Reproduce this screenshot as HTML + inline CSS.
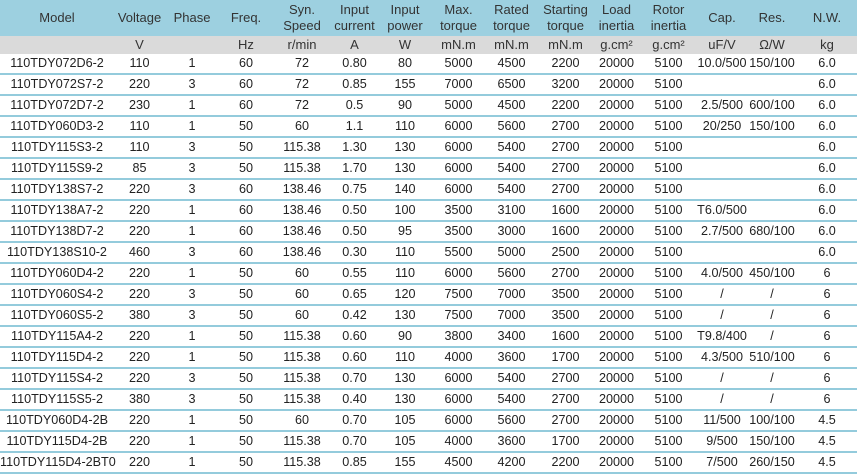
<!DOCTYPE html>
<html><head><meta charset="utf-8"><style>
*{margin:0;padding:0;box-sizing:border-box}
body{width:857px;height:475px;background:#fff;font-family:"Liberation Sans",Arial,sans-serif;font-size:12.6px;color:#222;overflow:hidden}
table{border-collapse:separate;border-spacing:0;table-layout:fixed;width:857px}
td{text-align:center;white-space:nowrap;overflow:visible;padding:0}
tr.h td{background:#9dd0e0;height:36px;line-height:16px;color:#333;font-size:13px}
tr.u td{background:#dadada;height:18px;line-height:18px;color:#333;font-size:13px}
tr.r td{height:21px;line-height:19px;border-bottom:2px solid #94cbdc}
</style></head><body>
<table>
<colgroup><col style="width:114px"><col style="width:51px"><col style="width:54px"><col style="width:54px"><col style="width:58px"><col style="width:47px"><col style="width:54px"><col style="width:53px"><col style="width:53px"><col style="width:55px"><col style="width:47px"><col style="width:57px"><col style="width:50px"><col style="width:50px"><col style="width:60px"></colgroup>
<tr class="h"><td>Model</td><td>Voltage</td><td>Phase</td><td>Freq.</td><td>Syn.<br>Speed</td><td>Input<br>current</td><td>Input<br>power</td><td>Max.<br>torque</td><td>Rated<br>torque</td><td>Starting<br>torque</td><td>Load<br>inertia</td><td>Rotor<br>inertia</td><td>Cap.</td><td>Res.</td><td>N.W.</td></tr>
<tr class="u"><td></td><td>V</td><td></td><td>Hz</td><td>r/min</td><td>A</td><td>W</td><td>mN.m</td><td>mN.m</td><td>mN.m</td><td>g.cm²</td><td>g.cm²</td><td>uF/V</td><td>Ω/W</td><td>kg</td></tr>
<tr class="r"><td>110TDY072D6-2</td><td>110</td><td>1</td><td>60</td><td>72</td><td>0.80</td><td>80</td><td>5000</td><td>4500</td><td>2200</td><td>20000</td><td>5100</td><td>10.0/500</td><td>150/100</td><td>6.0</td></tr>
<tr class="r"><td>110TDY072S7-2</td><td>220</td><td>3</td><td>60</td><td>72</td><td>0.85</td><td>155</td><td>7000</td><td>6500</td><td>3200</td><td>20000</td><td>5100</td><td></td><td></td><td>6.0</td></tr>
<tr class="r"><td>110TDY072D7-2</td><td>230</td><td>1</td><td>60</td><td>72</td><td>0.5</td><td>90</td><td>5000</td><td>4500</td><td>2200</td><td>20000</td><td>5100</td><td>2.5/500</td><td>600/100</td><td>6.0</td></tr>
<tr class="r"><td>110TDY060D3-2</td><td>110</td><td>1</td><td>50</td><td>60</td><td>1.1</td><td>110</td><td>6000</td><td>5600</td><td>2700</td><td>20000</td><td>5100</td><td>20/250</td><td>150/100</td><td>6.0</td></tr>
<tr class="r"><td>110TDY115S3-2</td><td>110</td><td>3</td><td>50</td><td>115.38</td><td>1.30</td><td>130</td><td>6000</td><td>5400</td><td>2700</td><td>20000</td><td>5100</td><td></td><td></td><td>6.0</td></tr>
<tr class="r"><td>110TDY115S9-2</td><td>85</td><td>3</td><td>50</td><td>115.38</td><td>1.70</td><td>130</td><td>6000</td><td>5400</td><td>2700</td><td>20000</td><td>5100</td><td></td><td></td><td>6.0</td></tr>
<tr class="r"><td>110TDY138S7-2</td><td>220</td><td>3</td><td>60</td><td>138.46</td><td>0.75</td><td>140</td><td>6000</td><td>5400</td><td>2700</td><td>20000</td><td>5100</td><td></td><td></td><td>6.0</td></tr>
<tr class="r"><td>110TDY138A7-2</td><td>220</td><td>1</td><td>60</td><td>138.46</td><td>0.50</td><td>100</td><td>3500</td><td>3100</td><td>1600</td><td>20000</td><td>5100</td><td>T6.0/500</td><td></td><td>6.0</td></tr>
<tr class="r"><td>110TDY138D7-2</td><td>220</td><td>1</td><td>60</td><td>138.46</td><td>0.50</td><td>95</td><td>3500</td><td>3000</td><td>1600</td><td>20000</td><td>5100</td><td>2.7/500</td><td>680/100</td><td>6.0</td></tr>
<tr class="r"><td>110TDY138S10-2</td><td>460</td><td>3</td><td>60</td><td>138.46</td><td>0.30</td><td>110</td><td>5500</td><td>5000</td><td>2500</td><td>20000</td><td>5100</td><td></td><td></td><td>6.0</td></tr>
<tr class="r"><td>110TDY060D4-2</td><td>220</td><td>1</td><td>50</td><td>60</td><td>0.55</td><td>110</td><td>6000</td><td>5600</td><td>2700</td><td>20000</td><td>5100</td><td>4.0/500</td><td>450/100</td><td>6</td></tr>
<tr class="r"><td>110TDY060S4-2</td><td>220</td><td>3</td><td>50</td><td>60</td><td>0.65</td><td>120</td><td>7500</td><td>7000</td><td>3500</td><td>20000</td><td>5100</td><td>/</td><td>/</td><td>6</td></tr>
<tr class="r"><td>110TDY060S5-2</td><td>380</td><td>3</td><td>50</td><td>60</td><td>0.42</td><td>130</td><td>7500</td><td>7000</td><td>3500</td><td>20000</td><td>5100</td><td>/</td><td>/</td><td>6</td></tr>
<tr class="r"><td>110TDY115A4-2</td><td>220</td><td>1</td><td>50</td><td>115.38</td><td>0.60</td><td>90</td><td>3800</td><td>3400</td><td>1600</td><td>20000</td><td>5100</td><td>T9.8/400</td><td>/</td><td>6</td></tr>
<tr class="r"><td>110TDY115D4-2</td><td>220</td><td>1</td><td>50</td><td>115.38</td><td>0.60</td><td>110</td><td>4000</td><td>3600</td><td>1700</td><td>20000</td><td>5100</td><td>4.3/500</td><td>510/100</td><td>6</td></tr>
<tr class="r"><td>110TDY115S4-2</td><td>220</td><td>3</td><td>50</td><td>115.38</td><td>0.70</td><td>130</td><td>6000</td><td>5400</td><td>2700</td><td>20000</td><td>5100</td><td>/</td><td>/</td><td>6</td></tr>
<tr class="r"><td>110TDY115S5-2</td><td>380</td><td>3</td><td>50</td><td>115.38</td><td>0.40</td><td>130</td><td>6000</td><td>5400</td><td>2700</td><td>20000</td><td>5100</td><td>/</td><td>/</td><td>6</td></tr>
<tr class="r"><td>110TDY060D4-2B</td><td>220</td><td>1</td><td>50</td><td>60</td><td>0.70</td><td>105</td><td>6000</td><td>5600</td><td>2700</td><td>20000</td><td>5100</td><td>11/500</td><td>100/100</td><td>4.5</td></tr>
<tr class="r"><td>110TDY115D4-2B</td><td>220</td><td>1</td><td>50</td><td>115.38</td><td>0.70</td><td>105</td><td>4000</td><td>3600</td><td>1700</td><td>20000</td><td>5100</td><td>9/500</td><td>150/100</td><td>4.5</td></tr>
<tr class="r"><td>110TDY115D4-2BT0</td><td>220</td><td>1</td><td>50</td><td>115.38</td><td>0.85</td><td>155</td><td>4500</td><td>4200</td><td>2200</td><td>20000</td><td>5100</td><td>7/500</td><td>260/150</td><td>4.5</td></tr>
</table>
</body></html>
